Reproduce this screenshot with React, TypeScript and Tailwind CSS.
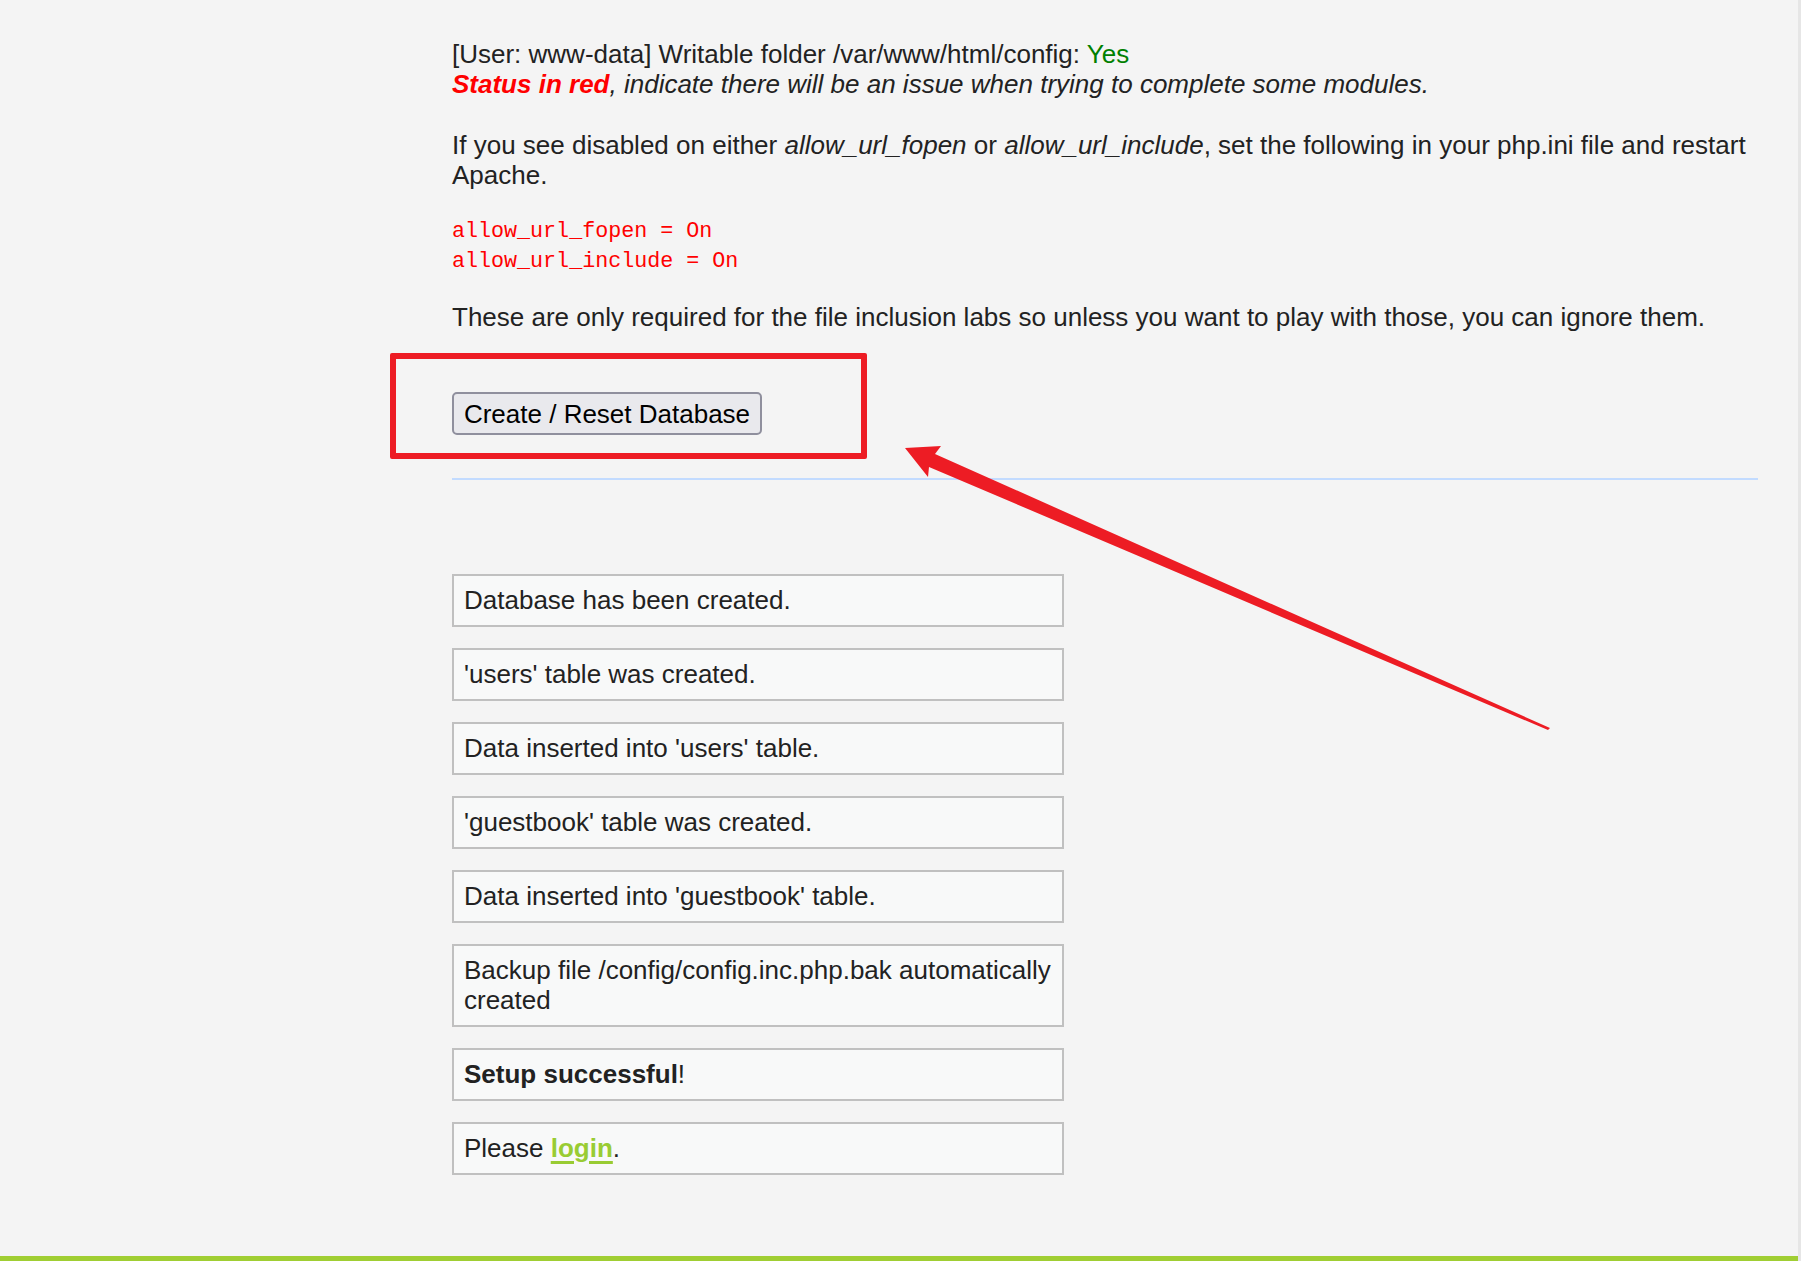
import React from "react";

const boxCls =
  "border-2 border-[#c0c0c0] bg-[#f8f9f9] px-[10px] pt-[9px] pb-[10px] text-[26px] leading-[30px] text-[#222]";

export default function App() {
  return (
    <div className="relative flex min-h-[1261px] w-[1801px] bg-[#f4f4f4] font-['Liberation_Sans',Arial,sans-serif] text-[#222]">
      <div className="flex w-[1798px] flex-col">
        <div className="flex flex-1">
          <div className="w-[452px] shrink-0" />
          <div className="w-[1306px] pt-[39px] text-[26px] leading-[30px]">
            <p>
              [User: www-data] Writable folder /var/www/html/config:{" "}
              <span className="text-[#008000]">Yes</span>
              <br />
              <em className="font-bold text-[#ff0000]">Status in red</em>
              <em>, indicate there will be an issue when trying to complete some modules.</em>
            </p>
            <p className="mt-[31px] whitespace-nowrap">
              If you see disabled on either <em>allow_url_fopen</em> or <em>allow_url_include</em>, set
              the following in your php.ini file and restart
              <br />
              Apache.
            </p>
            <pre className="mt-[27px] font-['Liberation_Mono','Courier_New',monospace] text-[21.7px] leading-[30px] text-[#ff0000]">
              allow_url_fopen = On{"\n"}allow_url_include = On
            </pre>
            <p className="mt-[25px]">
              These are only required for the file inclusion labs so unless you want to play with
              those, you can ignore them.
            </p>
            <button className="mt-[60px] h-[43px] w-[310px] rounded-[5px] border-2 border-[#8f8f9d] bg-[#e9e9ed] text-[26px] leading-[30px] text-black">
              Create / Reset Database
            </button>
            <div className="mt-[43px] h-[2px] w-full bg-[#c2dbff]" />
            <div className="mt-[94px] flex w-[612px] flex-col gap-[21px]">
              <div className={boxCls}>Database has been created.</div>
              <div className={boxCls}>'users' table was created.</div>
              <div className={boxCls}>Data inserted into 'users' table.</div>
              <div className={boxCls}>'guestbook' table was created.</div>
              <div className={boxCls}>Data inserted into 'guestbook' table.</div>
              <div className={boxCls + " whitespace-nowrap"}>
                Backup file /config/config.inc.php.bak automatically
                <br />
                created
              </div>
              <div className={boxCls}>
                <b>Setup successful</b>!
              </div>
              <div className={boxCls}>
                Please{" "}
                <a
                  href="#"
                  className="font-bold text-[#99cc33] underline decoration-[3px] underline-offset-[4px]"
                >
                  login
                </a>
                .
              </div>
            </div>
          </div>
        </div>
        <div className="h-[5px] w-full bg-[#a0ce33]" />
      </div>
      <div className="w-[3px] bg-[#e6e6e6]" />

      {/* annotation: red box */}
      <div className="pointer-events-none absolute left-[390px] top-[353px] h-[106px] w-[477px] rounded-[2px] border-[6px] border-[#ed1c24]" />
      {/* annotation: arrow */}
      <svg
        className="pointer-events-none absolute left-0 top-0"
        width="1801"
        height="1261"
        viewBox="0 0 1801 1261"
      >
        <polygon
          points="905,448 941,446 935,454 1550,728 1548,730 929,467 928,477"
          fill="#ed1c24"
        />
      </svg>
    </div>
  );
}
